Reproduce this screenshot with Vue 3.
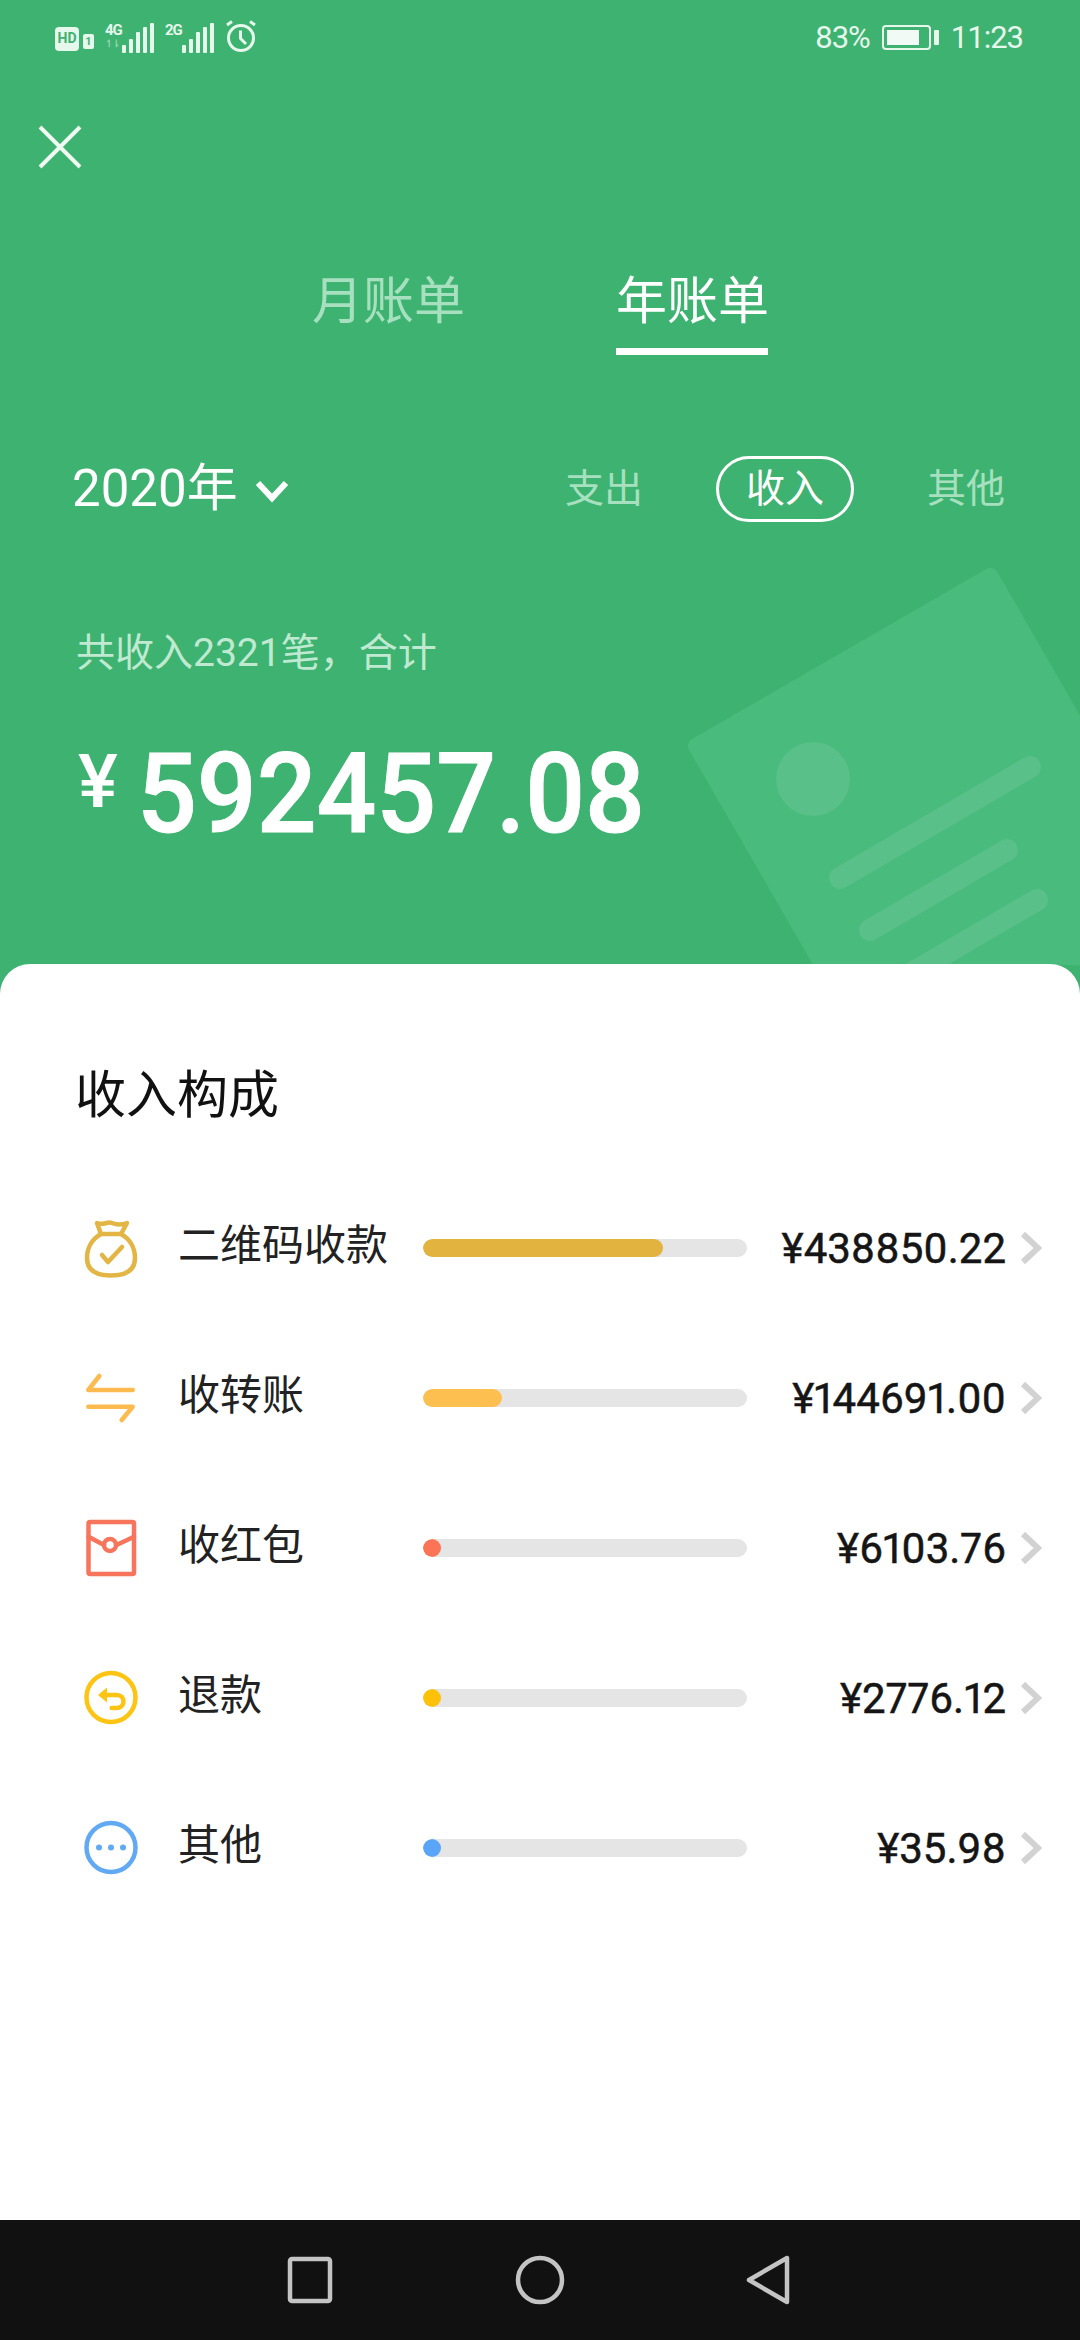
<template>
  <div class="page">
    <header class="hero">
      <svg class="hero-art" width="420" height="420" viewBox="660 545 420 420">
        <rect class="art-card" x="685" y="743" width="356" height="520" rx="8" transform="rotate(-30 685 743)" />
        <circle class="art-mark" cx="813" cy="779" r="37" />
        <line class="art-line" x1="840" y1="878" x2="1030" y2="767" />
        <line class="art-line" x1="870" y1="930" x2="1007" y2="850" />
        <line class="art-line" x1="900" y1="980" x2="1037" y2="900" />
      </svg>

      <div class="status-bar">
        <div class="status-left">
          <span class="hd-badge">HD</span>
          <span class="sim-badge">1</span>
          <div v-for="net in networks" :key="net.name" class="network">
            <div class="network-label">
              <span>{{ net.name }}</span>
              <i v-if="net.arrows">↿⇂</i>
            </div>
            <div class="signal">
              <span v-for="h in signalBars" :key="h" class="signal-bar" :style="{ height: h + 'px' }"></span>
            </div>
          </div>
          <svg class="alarm" width="32" height="34" viewBox="0 0 32 34">
            <circle cx="16" cy="19" r="12.5" />
            <path d="M15.5 11.5V19.5L21 25" />
            <path d="M2 6L7 2.5M30 6L25 2.5" />
          </svg>
        </div>
        <div class="status-right">
          <span>83%</span>
          <div class="battery">
            <div class="battery-body"><div class="battery-level"></div></div>
            <div class="battery-cap"></div>
          </div>
          <span>11:23</span>
        </div>
      </div>

      <button class="close-btn" aria-label="Close">
        <svg width="44" height="44" viewBox="0 0 44 44">
          <path d="M2 2L42 42M42 2L2 42" />
        </svg>
      </button>

      <nav class="tabs">
        <div class="tab">月账单</div>
        <div class="tab active">年账单</div>
      </nav>

      <div class="controls">
        <div class="year-picker">
          <span>2020年</span>
          <svg width="34" height="24" viewBox="0 0 34 24">
            <path d="M3 4L17 19L31 4" />
          </svg>
        </div>
        <div class="types">
          <span class="type">支出</span>
          <span class="type active">收入</span>
          <span class="type">其他</span>
        </div>
      </div>

      <p class="summary">{{ summaryText }}</p>
      <div class="total">
        <span class="currency">¥</span>
        <span class="amount">592457.08</span>
      </div>
    </header>

    <main class="sheet">
      <h2 class="sheet-title">收入构成</h2>
      <div v-for="item in items" :key="item.name" class="row">
        <svg class="row-icon" :style="{ color: item.iconColor }" width="60" height="60" viewBox="0 0 60 60">
          <template v-if="item.icon === 'bag'">
            <path d="M20 16C11 21 6 30 6 40C6 52 14 57.5 30 57.5C46 57.5 54 52 54 40C54 30 49 21 40 16Z" />
            <path d="M20 16L16 5C22 8 26 3 31 5C36 7 41 7 46 5L40 16" />
            <path d="M21 37L27 44L41 29" />
          </template>
          <template v-else-if="item.icon === 'transfer'">
            <path d="M51.7 22H7.3L18.3 8" />
            <path d="M7.3 38.7H51.7L40.7 52" />
          </template>
          <template v-else-if="item.icon === 'packet'">
            <rect x="7.5" y="4" width="45.5" height="52" rx="1.5" />
            <path d="M7.5 18.7L23 27M53 18.7L35.5 27" />
            <circle cx="29" cy="27" r="6" />
          </template>
          <template v-else-if="item.icon === 'refund'">
            <circle cx="30" cy="29.5" r="24.5" />
            <path d="M22 27H35.7C40 27 42.5 30 42.5 33.5C42.5 37 40 40 35 40H30.7" />
            <path class="solid" d="M17 27L26 19.5V34.5Z" />
          </template>
          <template v-else>
            <circle cx="30" cy="29.5" r="24.5" />
            <circle class="solid" cx="18" cy="29.5" r="3" />
            <circle class="solid" cx="30" cy="29.5" r="3" />
            <circle class="solid" cx="42" cy="29.5" r="3" />
          </template>
        </svg>
        <span class="row-name">{{ item.name }}</span>
        <div class="track">
          <div class="fill" :style="{ width: item.percent + '%', background: item.color }"></div>
        </div>
        <span class="row-amount">{{ item.amount }}</span>
        <svg class="chevron" width="22" height="34" viewBox="0 0 22 34">
          <path d="M3 3L18 17L3 31" />
        </svg>
      </div>
    </main>

    <footer class="nav-bar">
      <svg width="48" height="48" viewBox="0 0 48 48"><rect x="4" y="3" width="40" height="42" rx="2" /></svg>
      <svg width="50" height="50" viewBox="0 0 50 50"><circle cx="25" cy="25" r="22" /></svg>
      <svg width="46" height="50" viewBox="0 0 46 50"><path d="M3 25L41 3V47Z" /></svg>
    </footer>
  </div>
</template>

<script setup>
const summaryText = '共收入2321笔\uFF0C合计'

const signalBars = [8, 14, 21, 26, 30]

const networks = [
  { name: '4G', arrows: true },
  { name: '2G', arrows: false }
]

const items = [
  { name: '二维码收款', amount: '¥438850.22', percent: 74, color: '#e2b33f', iconColor: '#e2b544', icon: 'bag' },
  { name: '收转账', amount: '¥144691.00', percent: 24.5, color: '#fdbf50', iconColor: '#fdbb4f', icon: 'transfer' },
  { name: '收红包', amount: '¥6103.76', percent: 5.5, color: '#fb7455', iconColor: '#f6755c', icon: 'packet' },
  { name: '退款', amount: '¥2776.12', percent: 5.5, color: '#fdc109', iconColor: '#fdc413', icon: 'refund' },
  { name: '其他', amount: '¥35.98', percent: 5.5, color: '#5aa5f7', iconColor: '#62a9f4', icon: 'other' }
]
</script>

<style>
html,
body {
  margin: 0;
  background: #fff;
}
</style>

<style scoped>
.page {
  width: 1080px;
  height: 2340px;
  display: flex;
  flex-direction: column;
  overflow: hidden;
  background: #3eb270;
  font-family: Roboto, "Noto Sans CJK SC", sans-serif;
}

.hero {
  position: relative;
  height: 965px;
  flex-shrink: 0;
  box-sizing: border-box;
  background: #3eb270;
  color: #fff;
  overflow: hidden;
}

.hero-art {
  position: absolute;
  left: 660px;
  top: 545px;
}

.art-card {
  fill: #49bb7c;
}

.art-mark {
  fill: #58c088;
}

.art-line {
  stroke: #58c088;
  stroke-width: 22px;
  stroke-linecap: round;
}

.status-bar {
  position: relative;
  height: 74px;
  display: flex;
  justify-content: space-between;
  align-items: center;
  padding: 0 57px 0 55px;
  color: #e6f7ec;
}

.status-left {
  display: flex;
  align-items: flex-end;
  height: 32px;
}

.hd-badge {
  width: 24px;
  height: 24px;
  border-radius: 4px;
  background: #e6f7ec;
  color: #3eb270;
  font-size: 14px;
  font-weight: 700;
  line-height: 22px;
  text-align: center;
  margin-bottom: 2px;
}

.sim-badge {
  width: 11px;
  height: 15px;
  margin: 0 11px 4px 4px;
  border-radius: 2px;
  background: #e6f7ec;
  color: #3eb270;
  font-size: 11px;
  font-weight: 700;
  line-height: 15px;
  text-align: center;
}

.network {
  display: flex;
  align-items: flex-end;
  margin-right: 11px;
}

.network-label {
  width: 17px;
  height: 30px;
  font-size: 15px;
  font-weight: 700;
  line-height: 14px;
  letter-spacing: -1px;
}

.network-label i {
  display: block;
  font-size: 10px;
  font-style: normal;
  line-height: 14px;
  opacity: 0.45;
}

.signal {
  display: flex;
  align-items: flex-end;
  gap: 3px;
}

.signal-bar {
  width: 4px;
  border-radius: 1px;
  background: #e6f7ec;
}

.alarm {
  fill: none;
  stroke: #e6f7ec;
  stroke-width: 3px;
}

.status-right {
  display: flex;
  align-items: center;
  gap: 12px;
  font-size: 31px;
  letter-spacing: -1px;
}

.battery {
  display: flex;
  align-items: center;
  gap: 3px;
}

.battery-body {
  width: 49px;
  height: 25px;
  box-sizing: border-box;
  padding: 3px;
  border: 2px solid #e6f7ec;
  border-radius: 4px;
}

.battery-level {
  width: 83%;
  height: 100%;
  background: #f2faf5;
}

.battery-cap {
  width: 5px;
  height: 15px;
  border-radius: 1px;
  background: #e6f7ec;
}

.close-btn {
  position: relative;
  display: block;
  margin: 51px 0 0 38px;
  padding: 0;
  width: 44px;
  height: 44px;
  border: none;
  background: none;
}

.close-btn svg {
  display: block;
  fill: none;
  stroke: #eefaf2;
  stroke-width: 4px;
}

.tabs {
  position: relative;
  display: flex;
  justify-content: center;
  gap: 152px;
  margin-top: 97px;
}

.tab {
  height: 89px;
  box-sizing: border-box;
  width: 152px;
  font-size: 51px;
  line-height: 72px;
  text-align: center;
  white-space: nowrap;
  color: #a6e0bf;
}

.tab.active {
  color: #fff;
  border-bottom: 7px solid #fff;
}

.controls {
  position: relative;
  display: flex;
  justify-content: space-between;
  align-items: center;
  margin-top: 101px;
  padding: 0 75px 0 72px;
}

.year-picker {
  display: flex;
  align-items: center;
  gap: 17px;
  font-size: 51px;
  line-height: 66px;
}

.year-picker svg {
  margin-top: 3px;
  fill: none;
  stroke: #fff;
  stroke-width: 6px;
}

.types {
  display: flex;
  align-items: center;
  gap: 73px;
}

.type {
  width: 78px;
  font-size: 39px;
  line-height: 66px;
  text-align: center;
  white-space: nowrap;
  color: #a6e0bf;
}

.type.active {
  width: 138px;
  box-sizing: border-box;
  height: 66px;
  line-height: 60px;
  border: 3px solid #fff;
  border-radius: 33px;
  color: #fff;
}

.summary {
  position: relative;
  margin: 103px 0 0 76px;
  font-size: 39px;
  line-height: 56px;
  color: #bfe9d1;
}

.total {
  position: relative;
  display: flex;
  align-items: flex-start;
  margin: 58px 0 0 78px;
}

.currency {
  margin-top: 3px;
  font-size: 75px;
  font-weight: 500;
  line-height: 78px;
}

.amount {
  margin-left: 19px;
  font-size: 112px;
  font-weight: 500;
  line-height: 110px;
  -webkit-text-stroke: 1px #fff;
  transform: scaleX(0.94);
  transform-origin: left center;
}

.sheet {
  flex: 1;
  margin-top: -1px;
  padding: 97px 38px 0 81px;
  position: relative;
  background: #fff;
  border-radius: 30px 30px 0 0;
}

.sheet-title {
  margin: 0 0 42px -6px;
  font-size: 51px;
  font-weight: 400;
  line-height: 70px;
  color: #111;
}

.row {
  display: flex;
  align-items: center;
  height: 150px;
}

.row-icon {
  flex-shrink: 0;
  fill: none;
  stroke: currentColor;
  stroke-width: 4.5px;
  stroke-linecap: round;
  stroke-linejoin: round;
}

.solid {
  fill: currentColor;
  stroke: none;
}

.row-name {
  width: 245px;
  margin-left: 37px;
  margin-top: -14px;
  font-size: 42px;
  color: #222;
  white-space: nowrap;
}

.track {
  width: 324px;
  height: 18px;
  flex-shrink: 0;
  border-radius: 9px;
  background: #e5e5e5;
  overflow: hidden;
}

.fill {
  height: 100%;
  border-radius: 9px;
}

.row-amount {
  flex: 1;
  font-size: 42px;
  font-weight: 400;
  font-feature-settings: "pnum";
  -webkit-text-stroke: 0.5px #151515;
  text-align: right;
  color: #151515;
}

.chevron {
  flex-shrink: 0;
  margin-left: 14px;
  fill: none;
  stroke: #d2d2d2;
  stroke-width: 6px;
}

.nav-bar {
  height: 120px;
  flex-shrink: 0;
  box-sizing: border-box;
  display: flex;
  justify-content: space-between;
  align-items: center;
  padding: 0 288px 0 286px;
  background: #111;
}

.nav-bar svg {
  fill: none;
  stroke: #c4c4c4;
  stroke-width: 4.5px;
  stroke-linejoin: round;
}
</style>
